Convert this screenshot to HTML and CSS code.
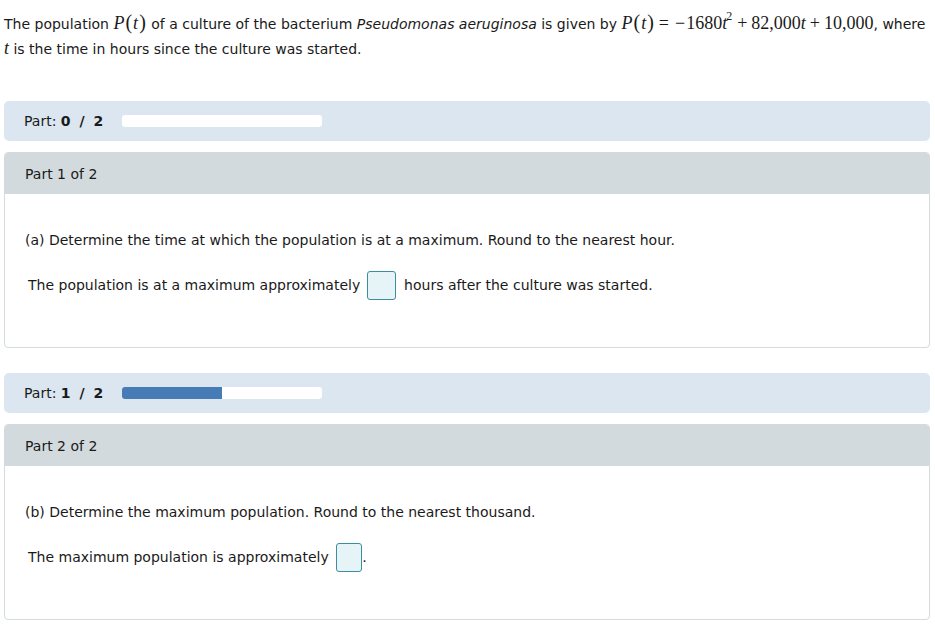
FILE: index.html
```html
<!DOCTYPE html>
<html>
<head>
<meta charset="utf-8">
<link rel="stylesheet" href="styles.css">
</head>
<body>
<div class="page">
  <p class="intro">The population <span class="math"><i>P</i><span class="paren">(</span><i>t</i><span class="paren">)</span></span> of a culture of the bacterium <i>Pseudomonas aeruginosa</i> is given by <span class="math"><i>P</i><span class="paren">(</span><i>t</i><span class="paren">)</span><span class="op">=</span><span class="minus">−</span>1680<i>t</i><sup>2</sup><span class="op">+</span>82,000<i>t</i><span class="op">+</span>10,000</span>, where <span class="math"><i>t</i></span> is the time in hours since the culture was started.</p>

  <div class="progress">
    <span class="plabel">Part: <b>0 / 2</b></span>
    <div class="track"><div class="fill" style="width:0%"></div></div>
  </div>

  <div class="part">
    <div class="part-head">Part 1 of 2</div>
    <div class="part-body">
      <p class="question">(a) Determine the time at which the population is at a maximum. Round to the nearest hour.</p>
      <p class="answer-line">The population is at a maximum approximately <span class="answer"></span> hours after the culture was started.</p>
    </div>
  </div>

  <div class="progress progress-second">
    <span class="plabel">Part: <b>1 / 2</b></span>
    <div class="track"><div class="fill" style="width:50%"></div></div>
  </div>

  <div class="part">
    <div class="part-head">Part 2 of 2</div>
    <div class="part-body">
      <p class="question">(b) Determine the maximum population. Round to the nearest thousand.</p>
      <p class="answer-line">The maximum population is approximately <span class="answer answer-end"></span>.</p>
    </div>
  </div>
</div>
</body>
</html>
```

FILE: styles.css
```css
html, body {
  margin: 0;
  padding: 0;
  background: #ffffff;
}

body {
  font-family: "DejaVu Sans", Verdana, sans-serif;
  font-size: 14px;
  color: #1a1a1a;
}

.page {
  padding: 0 5px 0 4px;
  display: flex;
  flex-direction: column;
}

.intro {
  margin: 0;
  padding-top: 12px;
  line-height: 25px;
  height: 49px;
}

.math {
  font-family: "Liberation Serif", "Times New Roman", serif;
  font-size: 18px;
  line-height: 1;
  white-space: nowrap;
}

.math i {
  font-style: italic;
}

.paren {
  font-size: 20px;
  line-height: 1;
  padding: 0 1px;
}

.op {
  padding: 0 4px;
}

.minus {
  padding: 0 1px 0 2px;
}

.math sup {
  font-size: 12px;
  vertical-align: 9px;
  line-height: 0;
  margin: 0 1px 0 -1px;
}

.progress {
  margin-top: 40px;
  height: 40px;
  background: #dbe6f0;
  border-radius: 5px;
  display: flex;
  align-items: center;
  padding-left: 20px;
  gap: 18px;
}

.progress-second {
  margin-top: 25px;
}

.plabel b {
  font-weight: bold;
  word-spacing: 3px;
  letter-spacing: 0.5px;
}

.track {
  width: 200px;
  height: 12px;
  background: #ffffff;
  border-radius: 3px;
  overflow: hidden;
}

.fill {
  height: 100%;
  background: #467bb5;
}

.part {
  margin-top: 11px;
  border: 1px solid #d3dbde;
  border-radius: 4px;
  overflow: hidden;
}

.part-head {
  height: 41px;
  background: #d2dadd;
  display: flex;
  align-items: center;
  padding-left: 20px;
}

.part-body {
  padding: 36px 20px 47px 20px;
}

.question {
  margin: 0;
  line-height: 20px;
}

.answer-line {
  margin: 20px 0 0 3px;
  line-height: 30px;
  display: flex;
  align-items: center;
  white-space: pre;
}

.answer {
  display: inline-block;
  width: 27px;
  height: 27px;
  border: 1px solid #3b8e9c;
  border-radius: 3px;
  background: #e6f4f8;
  margin: 0 4px 0 2px;
  flex: none;
}

.answer-end {
  width: 24px;
  margin: 0 0 0 3px;
}
```
